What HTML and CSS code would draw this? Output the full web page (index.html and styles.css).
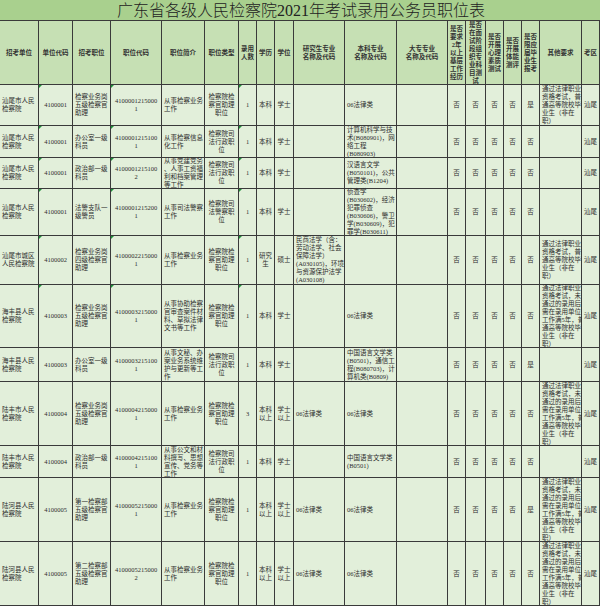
FILE: index.html
```html
<!DOCTYPE html>
<html lang="zh-CN">
<head>
<meta charset="utf-8">
<title>广东省各级人民检察院2021年考试录用公务员职位表</title>
<link rel="stylesheet" href="styles.css">
</head>
<body>
<div class="sheet">
  <div class="title">广东省各级人民检察院2021年考试录用公务员职位表</div>

  <div class="h">招考单位</div>
  <div class="h">单位代码</div>
  <div class="h">招考职位</div>
  <div class="h">职位代码</div>
  <div class="h">职位简介</div>
  <div class="h">职位类型</div>
  <div class="h">录用<br>人数</div>
  <div class="h">学历</div>
  <div class="h">学位</div>
  <div class="h">研究生专业<br>名称及代码</div>
  <div class="h">本科专业<br>名称及代码</div>
  <div class="h">大专专业<br>名称及代码</div>
  <div class="h">是否<br>要求<br>2年<br>以上<br>基层<br>工作<br>经历</div>
  <div class="h">是否<br>在面<br>试阶<br>段组<br>织专<br>业科<br>目测<br>试</div>
  <div class="h">是否<br>开展<br>心理<br>素质<br>测试</div>
  <div class="h">是否<br>开展<br>体能<br>测评</div>
  <div class="h">是否<br>限应<br>届毕<br>业生<br>报考</div>
  <div class="h">其他要求</div>
  <div class="h">考区</div>

  <!-- row 1 -->
  <div class="l">汕尾市人民<br>检察院</div>
  <div class="c t">4100001</div>
  <div class="l">检察业务岗<br>五级检察官<br>助理</div>
  <div class="c t">4100001215000<br>1</div>
  <div class="l">从事检察业务<br>工作</div>
  <div class="c">检察院检<br>察官助理<br>职位</div>
  <div class="c t">1</div>
  <div class="c">本科</div>
  <div class="c">学士</div>
  <div class="l"></div>
  <div class="l">06法律类</div>
  <div class="l"></div>
  <div class="c">否</div><div class="c">否</div><div class="c">否</div><div class="c">否</div><div class="c">是</div>
  <div class="l">通过法律职业<br>资格考试，普<br>通高等院校毕<br>业生（非在<br>职）</div>
  <div class="c">汕尾</div>

  <!-- row 2 -->
  <div class="l">汕尾市人民<br>检察院</div>
  <div class="c t">4100001</div>
  <div class="l">办公室一级<br>科员</div>
  <div class="c t">4100001215100<br>1</div>
  <div class="l">从事检察信息<br>化工作</div>
  <div class="c">检察院司<br>法行政职<br>位</div>
  <div class="c t">1</div>
  <div class="c">本科</div>
  <div class="c">学士</div>
  <div class="l"></div>
  <div class="l">计算机科学与技<br>术(B080901)，网<br>络工程<br>(B080903)</div>
  <div class="l"></div>
  <div class="c">否</div><div class="c">否</div><div class="c">否</div><div class="c">否</div><div class="c">否</div>
  <div class="l"></div>
  <div class="c">汕尾</div>

  <!-- row 3 -->
  <div class="l">汕尾市人民<br>检察院</div>
  <div class="c t">4100001</div>
  <div class="l">政治部一级<br>科员</div>
  <div class="c t">4100001215100<br>2</div>
  <div class="l">从事党建党务<br>、人事工资福<br>利和档案管理<br>等工作</div>
  <div class="c">检察院司<br>法行政职<br>位</div>
  <div class="c t">1</div>
  <div class="c">本科</div>
  <div class="c">学士</div>
  <div class="l"></div>
  <div class="l">汉语言文学<br>(B050101)，公共<br>管理类(B1204)</div>
  <div class="l"></div>
  <div class="c">否</div><div class="c">否</div><div class="c">否</div><div class="c">否</div><div class="c">否</div>
  <div class="l"></div>
  <div class="c">汕尾</div>

  <!-- row 4 -->
  <div class="l">汕尾市人民<br>检察院</div>
  <div class="c t">4100001</div>
  <div class="l">法警支队一<br>级警员</div>
  <div class="c t">4100001215200<br>1</div>
  <div class="l">从事司法警察<br>工作</div>
  <div class="c">检察院司<br>法警察职<br>位</div>
  <div class="c t">1</div>
  <div class="c">本科</div>
  <div class="c">学士</div>
  <div class="l"></div>
  <div class="l">侦查学<br>(B030602)，经济<br>犯罪侦查<br>(B030606)，警卫<br>学(B030609)，犯<br>罪学(B030611)</div>
  <div class="l"></div>
  <div class="c">否</div><div class="c">否</div><div class="c">否</div><div class="c">否</div><div class="c">否</div>
  <div class="l"></div>
  <div class="c">汕尾</div>

  <!-- row 5 -->
  <div class="l">汕尾市城区<br>人民检察院</div>
  <div class="c t">4100002</div>
  <div class="l">检察业务岗<br>四级检察官<br>助理</div>
  <div class="c t">4100002215000<br>1</div>
  <div class="l">从事检察业务<br>工作</div>
  <div class="c">检察院检<br>察官助理<br>职位</div>
  <div class="c t">1</div>
  <div class="c">研究<br>生</div>
  <div class="c">硕士</div>
  <div class="l">民商法学（含：<br>劳动法学、社会<br>保障法学）<br>(A030105)，环境<br>与资源保护法学<br>(A030108)</div>
  <div class="l"></div>
  <div class="l"></div>
  <div class="c">否</div><div class="c">否</div><div class="c">否</div><div class="c">否</div><div class="c">否</div>
  <div class="l">通过法律职业<br>资格考试，普<br>通高等院校毕<br>业生（非在<br>职）</div>
  <div class="c">汕尾</div>

  <!-- row 6 -->
  <div class="l">海丰县人民<br>检察院</div>
  <div class="c t">4100003</div>
  <div class="l">检察业务岗<br>五级检察官<br>助理</div>
  <div class="c t">4100003215000<br>1</div>
  <div class="l">从事协助检察<br>官审查案件材<br>料、草拟法律<br>文书等工作</div>
  <div class="c">检察院检<br>察官助理<br>职位</div>
  <div class="c t">1</div>
  <div class="c">本科</div>
  <div class="c">学士</div>
  <div class="l"></div>
  <div class="l">06法律类</div>
  <div class="l"></div>
  <div class="c">否</div><div class="c">否</div><div class="c">否</div><div class="c">否</div><div class="c">否</div>
  <div class="l">通过法律职业<br>资格考试，未<br>通过的录用后<br>需在录用单位<br>工作满5年，普<br>通高等院校毕<br>业生（非在<br>职）</div>
  <div class="c">汕尾</div>

  <!-- row 7 -->
  <div class="l">海丰县人民<br>检察院</div>
  <div class="c">4100003</div>
  <div class="l">办公室一级<br>科员</div>
  <div class="c">4100003215100<br>1</div>
  <div class="l">从事文秘、办<br>案业务系统维<br>护与更新等工<br>作</div>
  <div class="c">检察院司<br>法行政职<br>位</div>
  <div class="c">1</div>
  <div class="c">本科</div>
  <div class="c">学士</div>
  <div class="l"></div>
  <div class="l">中国语言文学类<br>(B0501)，通信工<br>程(B080703)，计<br>算机类(B0809)</div>
  <div class="l"></div>
  <div class="c">否</div><div class="c">否</div><div class="c">否</div><div class="c">否</div><div class="c">是</div>
  <div class="l"></div>
  <div class="c">汕尾</div>

  <!-- row 8 -->
  <div class="l">陆丰市人民<br>检察院</div>
  <div class="c">4100004</div>
  <div class="l">检察业务岗<br>五级检察官<br>助理</div>
  <div class="c">4100004215000<br>1</div>
  <div class="l">从事检察业务<br>工作</div>
  <div class="c">检察院检<br>察官助理<br>职位</div>
  <div class="c">3</div>
  <div class="c">本科<br>以上</div>
  <div class="c">学士<br>以上</div>
  <div class="l">06法律类</div>
  <div class="l">06法律类</div>
  <div class="l"></div>
  <div class="c">否</div><div class="c">否</div><div class="c">否</div><div class="c">否</div><div class="c">否</div>
  <div class="l">通过法律职业<br>资格考试，未<br>通过的录用后<br>需在录用单位<br>工作满5年，普<br>通高等院校毕<br>业生（非在<br>职）</div>
  <div class="c">汕尾</div>

  <!-- row 9 -->
  <div class="l">陆丰市人民<br>检察院</div>
  <div class="c">4100004</div>
  <div class="l">政治部一级<br>科员</div>
  <div class="c">4100004215100<br>1</div>
  <div class="l">从事公文和材<br>料撰写、思想<br>宣传、党务等<br>工作</div>
  <div class="c">检察院司<br>法行政职<br>位</div>
  <div class="c">1</div>
  <div class="c">本科</div>
  <div class="c">学士</div>
  <div class="l"></div>
  <div class="l">中国语言文学类<br>(B0501)</div>
  <div class="l"></div>
  <div class="c">否</div><div class="c">否</div><div class="c">否</div><div class="c">否</div><div class="c">否</div>
  <div class="l"></div>
  <div class="c">汕尾</div>

  <!-- row 10 -->
  <div class="l">陆河县人民<br>检察院</div>
  <div class="c">4100005</div>
  <div class="l">第一检察部<br>五级检察官<br>助理</div>
  <div class="c">4100005215000<br>1</div>
  <div class="l">从事检察业务<br>工作</div>
  <div class="c">检察院检<br>察官助理<br>职位</div>
  <div class="c">1</div>
  <div class="c">本科<br>以上</div>
  <div class="c">学士<br>以上</div>
  <div class="l">06法律类</div>
  <div class="l">06法律类</div>
  <div class="l"></div>
  <div class="c">否</div><div class="c">否</div><div class="c">否</div><div class="c">否</div><div class="c">是</div>
  <div class="l">通过法律职业<br>资格考试，未<br>通过的录用后<br>需在录用单位<br>工作满5年，普<br>通高等院校毕<br>业生（非在<br>职）</div>
  <div class="c">汕尾</div>

  <!-- row 11 -->
  <div class="l">陆河县人民<br>检察院</div>
  <div class="c">4100005</div>
  <div class="l">第二检察部<br>五级检察官<br>助理</div>
  <div class="c">4100005215000<br>2</div>
  <div class="l">从事检察业务<br>工作</div>
  <div class="c">检察院检<br>察官助理<br>职位</div>
  <div class="c">1</div>
  <div class="c">本科<br>以上</div>
  <div class="c">学士<br>以上</div>
  <div class="l">06法律类</div>
  <div class="l">06法律类</div>
  <div class="l"></div>
  <div class="c">否</div><div class="c">否</div><div class="c">否</div><div class="c">否</div><div class="c">否</div>
  <div class="l">通过法律职业<br>资格考试，未<br>通过的录用后<br>需在录用单位<br>工作满5年，普<br>通高等院校毕<br>业生（非在<br>职）</div>
  <div class="c">汕尾</div>
</div>
</body>
</html>
```

FILE: styles.css
```css
* {
  box-sizing: border-box;
  margin: 0;
  padding: 0;
}

html,
body {
  width: 600px;
  height: 606px;
  overflow: hidden;
  background: #e2efda;
}

body {
  font-family: "Liberation Serif", "Noto Sans CJK SC", serif;
  color: #2e2e2e;
}

.sheet {
  display: grid;
  width: 600px;
  grid-template-columns: 39px 34px 38px 51px 43px 34px 18px 18px 19px 51px 52px 51px 18px 20px 18px 18px 18px 42px 18px;
  grid-template-rows: 21px 64px 41px 32px 31px 47px 49px 63px 34px 64px 32px 64px 64px;
}

.title {
  grid-column: 1 / -1;
  background: #a9d08e;
  border-bottom: 1px solid #3a3a3a;
  display: flex;
  align-items: center;
  justify-content: center;
  font-family: "Liberation Serif", "Noto Sans CJK SC", serif;
  font-size: 16px;
  font-weight: 300;
  line-height: 20px;
  color: #222;
  padding: 1px 0 0 2px;
}

.h,
.l,
.c {
  position: relative;
  display: flex;
  align-items: center;
  border-right: 1px solid #3a3a3a;
  border-bottom: 1px solid #3a3a3a;
  font-size: 6.5px;
  line-height: 8px;
  white-space: nowrap;
}

.h {
  background: #c6e0b4;
  justify-content: center;
  text-align: center;
  font-weight: 700;
  color: #333;
}

.l {
  background: #e2efda;
  justify-content: flex-start;
  text-align: left;
  padding: 0 1px 0 2px;
}

.c {
  background: #e2efda;
  justify-content: center;
  text-align: center;
}

.t::before {
  content: "";
  position: absolute;
  top: 0;
  left: 0;
  border-top: 3px solid #1f8f3a;
  border-right: 3px solid transparent;
}
```
